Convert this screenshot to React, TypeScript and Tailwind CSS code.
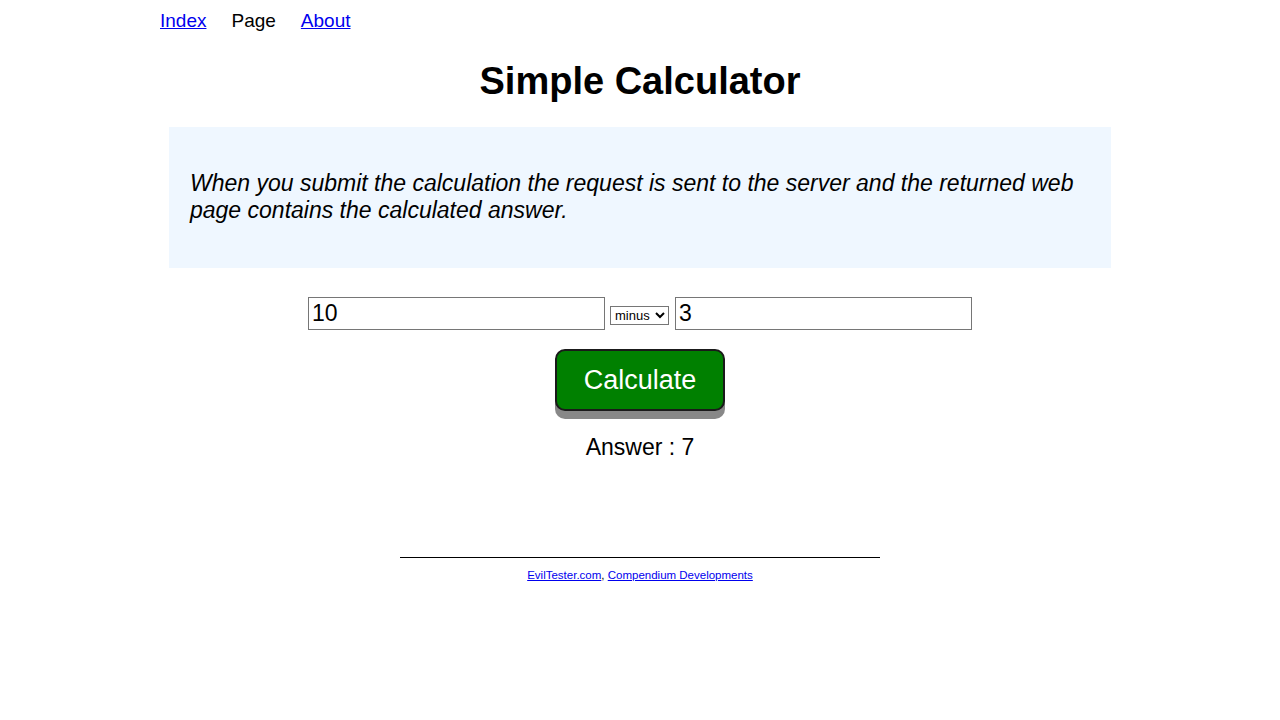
export default function App() {
  return (
    <div className="min-h-[720px] bg-white text-black font-['Liberation_Sans',Arial,sans-serif]">
      <div className="mx-auto w-[960px]">
        {/* NAV */}
        <nav className="flex gap-[25px] pt-[10px] text-[19px] leading-[22px]">
          <a href="#" className="text-[#0000ee] underline">Index</a>
          <span>Page</span>
          <a href="#" className="text-[#0000ee] underline">About</a>
        </nav>

        <h1 className="mt-[27px] text-center text-[38px] font-bold leading-[44px]">
          Simple Calculator
        </h1>

        {/* EXPLANATION */}
        <div className="mx-[9px] mt-[24px] h-[141px] bg-[#eff7ff] px-[21px] pt-[43px]">
          <p className="text-[23px] italic leading-[27px]">
            When you submit the calculation the request is sent to the server and the returned web page contains the calculated answer.
          </p>
        </div>

        {/* FORM */}
        <div className="mt-[29px] flex items-end justify-center">
          <input
            defaultValue="10"
            className="h-[33px] w-[297px] border border-[#767676] px-[3px] text-[23px] outline-none"
          />
          <select
            defaultValue="minus"
            className="mb-[5px] ml-[5px] mr-[6px] h-[19px] w-[59px] border border-[#767676] bg-white text-[13px] leading-[15px]"
          >
            <option value="plus">plus</option>
            <option value="minus">minus</option>
            <option value="times">times</option>
            <option value="divide">divide</option>
          </select>
          <input
            defaultValue="3"
            className="h-[33px] w-[297px] border border-[#767676] px-[3px] text-[23px] outline-none"
          />
        </div>

        <div className="mt-[19px] flex justify-center">
          <button className="h-[62px] w-[170px] rounded-[10px] border-2 border-[#1a1a1a] bg-[#008000] text-[27px] text-white shadow-[0_8px_0_#888888]">
            Calculate
          </button>
        </div>

        <p className="mt-[22px] text-center text-[23px] leading-[28px]">Answer : 7</p>

        {/* FOOTER */}
        <hr className="mx-auto mt-[96px] w-[480px] border-t border-black" />
        <p className="mt-[10px] text-center text-[11.5px] leading-[14px]">
          <a href="#" className="text-[#0000ee] underline">EvilTester.com</a>,{" "}
          <a href="#" className="text-[#0000ee] underline">Compendium Developments</a>
        </p>
      </div>
    </div>
  );
}
